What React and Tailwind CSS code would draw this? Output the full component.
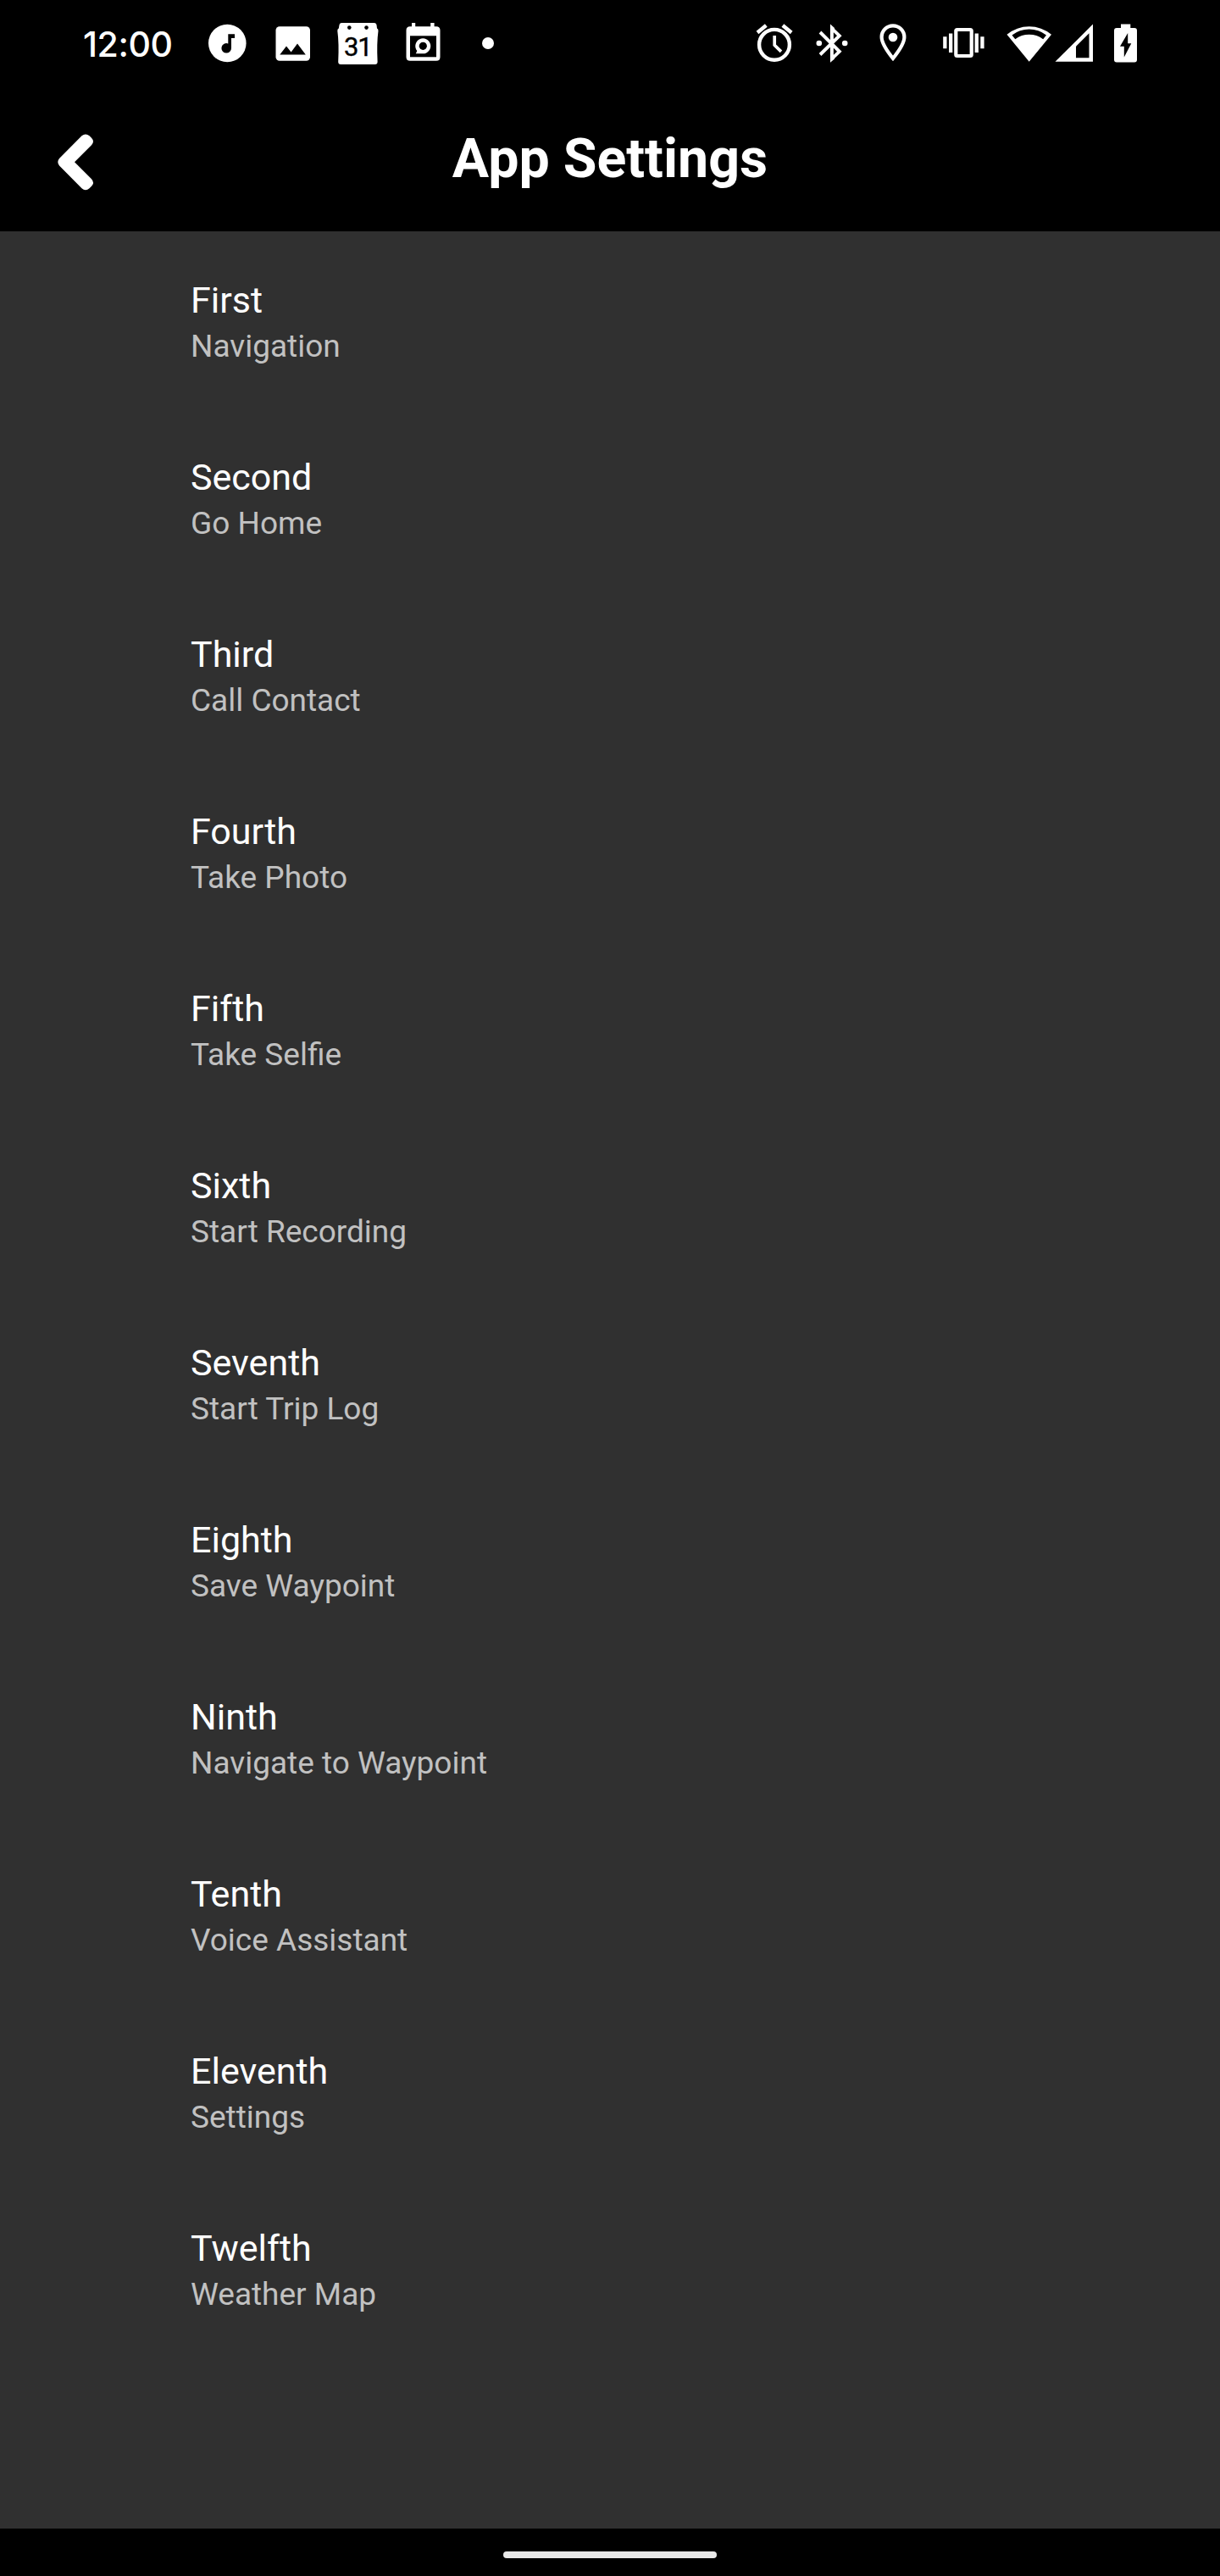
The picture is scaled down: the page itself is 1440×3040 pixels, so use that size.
const entries = [
  ["First", "Navigation"],
  ["Second", "Go Home"],
  ["Third", "Call Contact"],
  ["Fourth", "Take Photo"],
  ["Fifth", "Take Selfie"],
  ["Sixth", "Start Recording"],
  ["Seventh", "Start Trip Log"],
  ["Eighth", "Save Waypoint"],
  ["Ninth", "Navigate to Waypoint"],
  ["Tenth", "Voice Assistant"],
  ["Eleventh", "Settings"],
  ["Twelfth", "Weather Map"],
];

function MusicIcon() {
  return (
    <svg className="h-[60px] w-[46px]" viewBox="0 0 46 60" fill="white">
      <circle cx="23.3" cy="30" r="22.3" />
      <path fill="black" d="M24.3 19.2H32V24H28V35.5A5.8 5.8 0 1 1 24.3 30.4Z" />
    </svg>
  );
}

function ImageIcon() {
  return (
    <svg className="h-[60px] w-[42px]" viewBox="0 0 42 60" fill="white">
      <rect x="0.5" y="10.2" width="40.5" height="40.5" rx="4.5" />
      <path fill="black" d="M5.3 43.6L13 33.6L18.6 40.4L26 30.6L35.8 43.6Z" />
    </svg>
  );
}

function CalendarIcon() {
  return (
    <div className="relative h-[60px] w-[49px]">
      <svg className="h-[60px] w-[49px]" viewBox="0 0 49 60" fill="white">
        <path d="M5.500 6H43.500Q46.300 6 46.600 9L47 12.500Q48.600 13 48.500 15.500Q46.500 30 47.600 52Q47.600 55 44.600 55H4.200Q1.200 55 1.200 52Q2.300 30 .3 15.500Q.2 13 1.800 12.500L2.400 9Q2.700 6 5.500 6Z" />
        <circle cx="14.300" cy="11.600" r="2.300" fill="black" />
        <circle cx="34.500" cy="11.600" r="2.300" fill="black" />
      </svg>
      <span className="absolute top-[20px] left-[8px] font-['Roboto'] text-[31px] leading-[30px] font-normal tracking-[-1.2px] text-black [-webkit-text-stroke:0.4px_black]">31</span>
    </div>
  );
}

function EventIcon() {
  return (
    <svg className="h-[60px] w-[41px]" viewBox="0 0 41 60" fill="white">
      <path d="M7 6H11.200V10.200H29.200V6H33.600V10.200H36Q40.500 10.200 40.500 14.700V46.200Q40.500 50.700 36 50.700H5Q.5 50.700 .5 46.200V14.700Q.5 10.200 5 10.200H7Z" />
      <rect x="5" y="21.300" width="31" height="25" fill="black" />
      <path d="M11.800 42.300L13.300 39A9 9 0 1 1 20.300 42.300Z" />
      <circle cx="20.300" cy="33.300" r="4.600" fill="black" />
    </svg>
  );
}

function AlarmIcon() {
  return (
    <svg className="h-[60px] w-[44px]" viewBox="0 0 44 60" fill="none" stroke="white">
      <circle cx="22" cy="31.800" r="17.900" strokeWidth="4.400" />
      <path strokeWidth="4.400" d="M2 17.500L12.300 9M31.900 9L42.200 17.500" />
      <path strokeWidth="3.700" d="M22.200 21V32.300L30 39.800" />
    </svg>
  );
}

function BluetoothIcon() {
  return (
    <svg className="h-[60px] w-[38px]" viewBox="0 0 38 60" fill="none" stroke="white" strokeWidth="3.900">
      <path d="M5 17L27.800 39.800L18.900 48.300V12.700L27.800 21.200L5 43.500" />
      <path fill="white" stroke="none" d="M17 7.500L22 12V16H17ZM17 52.500L22 48.500V44H17Z" />
      <circle cx="3.800" cy="30" r="3.300" fill="white" stroke="none" />
      <circle cx="34.200" cy="30" r="3.300" fill="white" stroke="none" />
    </svg>
  );
}

function PinIcon() {
  return (
    <svg className="h-[60px] w-[32px]" viewBox="0 0 32 60" fill="none" stroke="white">
      <path strokeWidth="4.200" d="M16 9.400A13.400 13.400 0 0 0 2.600 22.800C2.600 31 10 40.500 16 48C22 40.500 29.400 31 29.400 22.800A13.400 13.400 0 0 0 16 9.400Z" />
      <circle cx="16" cy="23" r="5.300" fill="white" stroke="none" />
    </svg>
  );
}

function VibrateIcon() {
  return (
    <svg className="h-[60px] w-[50px]" viewBox="0 0 50 60" fill="white">
      <rect x="15.300" y="14" width="18.400" height="31" rx="1.500" fill="none" stroke="white" strokeWidth="4.200" />
      <path d="M0.200 22.300H4.500V36.300H.2ZM7 18.600H11.300V41H7ZM37.600 18.600H41.900V41H37.600ZM44.300 22.300H48.600V36.300H44.300Z" />
    </svg>
  );
}

function WifiIcon() {
  return (
    <svg className="h-[60px] w-[54px]" viewBox="0 0 54 60" fill="white">
      <path d="M.5 19.700A41.500 41.500 0 0 1 53 19.700L26.700 51.800Z" />
      <path fill="black" d="M6.500 20.500A33 33 0 0 1 47 20.500L43.200 25.300A27.500 27.500 0 0 0 10.300 25.300Z" />
    </svg>
  );
}

function SignalIcon() {
  return (
    <svg className="h-[60px] w-[46px]" viewBox="0 0 46 60" fill="white">
      <path d="M.5 51.800L45 7.500V51.800Z" />
      <path fill="black" d="M25 33.700L40.500 18.200V47.300H25Z" />
    </svg>
  );
}

function BatteryIcon() {
  return (
    <svg className="h-[60px] w-[28px]" viewBox="0 0 28 60" fill="white">
      <path d="M8 7.500H19.300V12H24Q27 12 27 15V49.500Q27 52.500 24 52.500H3Q0 52.500 0 49.500V15Q0 12 3 12H8Z" />
      <path fill="black" d="M16.200 18L7 33.800H11.800V46.500L20.300 30.200H16.200Z" />
    </svg>
  );
}

function StatusBar() {
  return (
    <div className="flex h-[102px] items-center pr-[97px] pl-[98px] text-white">
      <span className="w-[147px] pt-[3px] font-['Inter'] text-[41px] leading-none font-medium tracking-[-0.4px]">12:00</span>
      <MusicIcon />
      <div className="ml-[34px] flex"><ImageIcon /></div>
      <div className="ml-[31px] flex"><CalendarIcon /></div>
      <div className="ml-[32px] flex"><EventIcon /></div>
      <span className="ml-[49px] size-[14px] rounded-full bg-white" />
      <div className="ml-auto flex"><AlarmIcon /></div>
      <div className="ml-[27px] flex"><BluetoothIcon /></div>
      <div className="ml-[37px] flex"><PinIcon /></div>
      <div className="ml-[43px] flex"><VibrateIcon /></div>
      <div className="ml-[25px] flex"><WifiIcon /></div>
      <div className="ml-[3px] flex"><SignalIcon /></div>
      <div className="ml-[24px] flex"><BatteryIcon /></div>
    </div>
  );
}

export default function App() {
  return (
    <div className="flex h-[3040px] w-[1440px] flex-col bg-black font-['Roboto',sans-serif]">
      <StatusBar />
      <header className="flex h-[171px] items-start px-[66px]">
        <button className="mt-[54px] w-[46px]" aria-label="Back">
          <svg className="h-[71px] w-[46px]" viewBox="0 0 46 71" fill="white">
            <path d="M4 31L30.500 4.300Q35 .5 39.500 4.300L42 6.800Q46 11 42 15.300L22 35.300L42 55.300Q46 59.600 42 63.800L39.500 66.300Q35 70.100 30.500 66.300L4 39.600Q.5 35.300 4 31Z" />
          </svg>
        </button>
        <h1 className="mt-[47px] mr-[46px] flex-1 text-center text-[64.5px] leading-[76px] font-bold text-white">App Settings</h1>
      </header>
      <main className="flex-1 bg-[#303030] pt-[54px]">
        {entries.map(([title, value]) => (
          <div key={title} className="h-[209px] pl-[225px]">
            <div className="text-[43px] leading-[54px] text-white">{title}</div>
            <div className="pt-[2px] text-[37px] leading-[52px] text-[#c1c1c1]">{value}</div>
          </div>
        ))}
      </main>
      <footer className="flex h-[56px] justify-center pt-[27px]">
        <div className="h-[8px] w-[252px] rounded-full bg-[#e8e8e8]" />
      </footer>
    </div>
  );
}
